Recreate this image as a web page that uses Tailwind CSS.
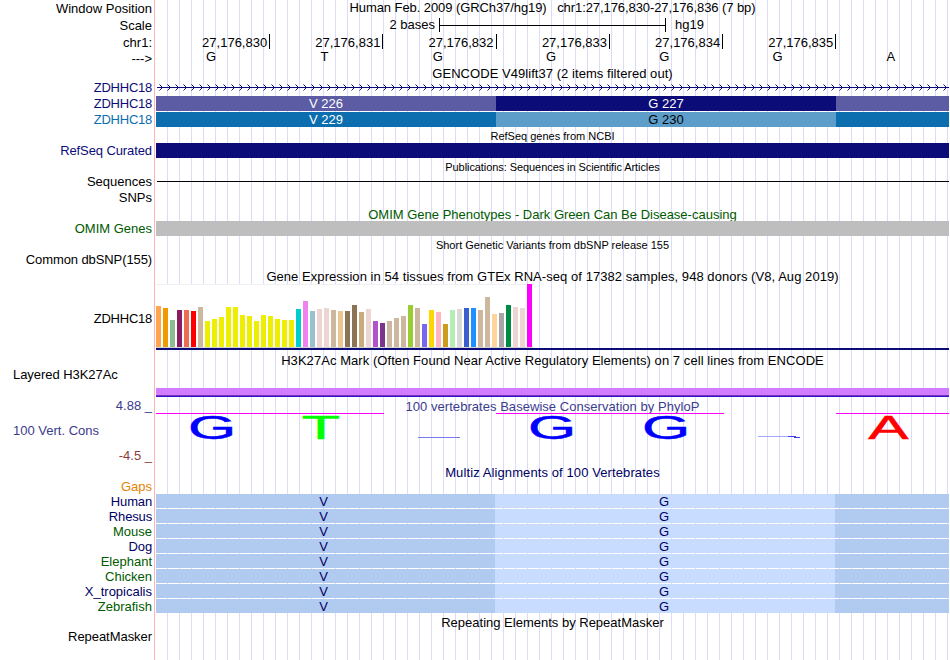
<!DOCTYPE html>
<html lang="en">
<head>
    <meta charset="UTF-8">
    <meta name="viewport" content="width=device-width, initial-scale=1.0">
    <title>Genome Browser</title>
    <script src="https://cdn.jsdelivr.net/npm/@tailwindcss/browser@4"></script>
</head>
<body class="bg-white">
  <main class="flex w-[949px] h-[660px] overflow-hidden font-['Liberation_Sans',Arial,sans-serif] text-[13px] leading-[15px] text-black whitespace-pre">

    <!-- track labels -->
    <section aria-label="labels" class="flex flex-col w-[155px] shrink-0 border-r border-[#ffb4b4] pr-[2px] text-right">
      <p class="h-[17px] pt-px">Window Position</p>
      <p class="h-[17px] pt-px">Scale</p>
      <p class="h-[16px] pt-px">chr1:</p>
      <p class="h-[15px] pt-px">---&gt;</p>
      <p class="h-[16px] mt-[15px] tracking-[-0.25px] text-[#0c0c78]">ZDHHC18</p>
      <p class="h-[16px] tracking-[-0.25px] text-[#0c0c78]">ZDHHC18</p>
      <p class="h-[16px] tracking-[-0.25px] text-[#0c6eaf]">ZDHHC18</p>
      <p class="h-[15px] mt-[15px] tracking-[-0.1px] text-[#0c0c78]">RefSeq Curated</p>
      <p class="h-[16px] mt-[16px]">Sequences</p>
      <p class="h-[15px]">SNPs</p>
      <p class="h-[15px] mt-[16px] text-[#005a00]">OMIM Genes</p>
      <p class="h-[15px] mt-[16px] tracking-[-0.1px]">Common dbSNP(155)</p>
      <p class="h-[15px] mt-[44px] tracking-[-0.25px]">ZDHHC18</p>
      <p class="h-[15px] mt-[41px] pl-[13px] text-left tracking-[-0.05px]">Layered H3K27Ac</p>
      <p class="h-[15px] mt-[16px] text-[#3c3c8c]">4.88 _</p>
      <p class="h-[15px] mt-[10px] pl-[13px] text-left text-[#3c3c8c]">100 Vert. Cons</p>
      <p class="h-[15px] mt-[10px] text-[#8c3c3c]">-4.5 _</p>
      <p class="h-[15px] mt-[16px] text-[#e68200]">Gaps</p>
      <p class="h-[15px] tracking-[-0.15px] text-[#000064]">Human</p>
      <p class="h-[15px] tracking-[-0.15px] text-[#000064]">Rhesus</p>
      <p class="h-[15px] text-[#005a00]">Mouse</p>
      <p class="h-[15px] tracking-[-0.15px] text-[#000064]">Dog</p>
      <p class="h-[15px] text-[#005a00]">Elephant</p>
      <p class="h-[15px] text-[#005a00]">Chicken</p>
      <p class="h-[15px] text-[#000064]">X_tropicalis</p>
      <p class="h-[15px] text-[#005a00]">Zebrafish</p>
      <p class="h-[15px] mt-[15px] tracking-[-0.05px]">RepeatMasker</p>
    </section>

    <!-- tracks, guide line every 12px -->
    <section aria-label="tracks" class="flex flex-col w-[793px] ml-px shrink-0 text-center bg-[repeating-linear-gradient(90deg,transparent_0px,transparent_11px,#dcdcf8_11px,#dcdcf8_12px)]">
      <h1 class="h-[17px] tracking-[-0.08px]">Human Feb. 2009 (GRCh37/hg19)   chr1:27,176,830-27,176,836 (7 bp)</h1>

      <!-- scale -->
      <div class="flex h-[17px]">
        <span class="w-[279px] text-right">2 bases</span>
        <div class="flex items-center w-[227px] h-[14px] mt-px ml-[4px] border-x border-black">
          <div class="w-full h-px bg-black"></div>
        </div>
        <span class="ml-[9px]">hg19</span>
      </div>

      <!-- positions -->
      <div class="flex h-[15px] ml-px text-right">
        <span class="w-[113.2px] pr-[2px] pt-px border-r border-black">27,176,830</span>
        <span class="w-[113.2px] pr-[2px] pt-px border-r border-black">27,176,831</span>
        <span class="w-[113.2px] pr-[2px] pt-px border-r border-black">27,176,832</span>
        <span class="w-[113.4px] pr-[2px] pt-px border-r border-black">27,176,833</span>
        <span class="w-[113.2px] pr-[2px] pt-px border-r border-black">27,176,834</span>
        <span class="w-[113.2px] pr-[2px] pt-px border-r border-black">27,176,835</span>
      </div>
      <div class="grid grid-cols-7 h-[17px]">
        <span class="pr-[3px]">G</span>
        <span class="pr-[3px]">T</span>
        <span class="pr-[3px]">G</span>
        <span class="pr-[3px]">G</span>
        <span class="pr-[3px]">G</span>
        <span class="pr-[3px]">G</span>
        <span class="pr-[3px]">A</span>
      </div>

      <!-- GENCODE -->
      <h2 class="h-[14px] tracking-[0.05px]">GENCODE V49lift37 (2 items filtered out)</h2>
      <svg class="h-[16px] w-full shrink-0" viewBox="0 0 793 16">
        <defs>
          <pattern id="intron" width="8" height="16" patternUnits="userSpaceOnUse">
            <path d="M3.5 4.5 L6.5 7.5 L3.5 10.5" fill="none" stroke="#0c0c78" stroke-width="1"/>
          </pattern>
        </defs>
        <rect x="1" y="7" width="792" height="1" fill="#0c0c78"/>
        <rect width="793" height="16" fill="url(#intron)"/>
      </svg>
      <div class="flex h-[15px] mb-px text-white">
        <span class="w-[340px] bg-[#5c5ca4]">V 226</span>
        <span class="w-[340px] bg-[#0c0c78]">G 227</span>
        <span class="flex-1 bg-[#5c5ca4]"></span>
      </div>
      <div class="flex h-[15px] mb-px">
        <span class="w-[340px] bg-[#0c6eaf] text-white">V 229</span>
        <span class="w-[340px] bg-[#5c9dc9]">G 230</span>
        <span class="flex-1 bg-[#0c6eaf]"></span>
      </div>

      <!-- RefSeq, publications, OMIM, dbSNP -->
      <h2 class="h-[15px] pt-px text-[11px]">RefSeq genes from NCBI</h2>
      <div class="h-[15px] bg-[#0c0c78]"></div>
      <h2 class="h-[23px] pt-[2px] text-[11px] tracking-[-0.07px]">Publications: Sequences in Scientific Articles</h2>
      <div class="h-px ml-px bg-black"></div>
      <h2 class="h-[39px] pt-[25px] text-[#005a00]">OMIM Gene Phenotypes - Dark Green Can Be Disease-causing</h2>
      <div class="h-[15px] bg-[#bebebe] z-10"></div>
      <h2 class="h-[33px] pt-[2px] text-[11px]">Short Genetic Variants from dbSNP release 155</h2>

      <!-- GTEx -->
      <h2 class="h-[15px] tracking-[0.055px]">Gene Expression in 54 tissues from GTEx RNA-seq of 17382 samples, 948 donors (V8, Aug 2019)</h2>
      <div id="gtex" class="flex items-end gap-[2px] w-[377px] h-[64px] bg-white border-y border-t-[#f0f0f0] border-b-[#d2d2d2]"></div>
      <div class="h-[2px] bg-[#0c0c78]"></div>

      <!-- H3K27Ac -->
      <h2 class="h-[38px] pt-[3px] tracking-[0.06px]">H3K27Ac Mark (Often Found Near Active Regulatory Elements) on 7 cell lines from ENCODE</h2>
      <div class="h-[7px] bg-[#d27dff]"></div>
      <div class="h-px bg-[#7832be]"></div>
      <div class="h-px bg-[#3214c8]"></div>

      <!-- PhyloP conservation -->
      <h2 class="h-[16px] pt-[2px] tracking-[0.04px] text-[#3c3c8c]">100 vertebrates Basewise Conservation by PhyloP</h2>
      <div class="flex h-px">
        <div class="w-[228px] bg-[#ff00ff]"></div>
        <div class="w-[228px] ml-[112px] bg-[#ff00ff]"></div>
        <div class="w-[113px] ml-[112px] bg-[#ff00ff]"></div>
      </div>
      <svg class="h-[51px] w-full shrink-0 overflow-visible" viewBox="0 0 793 51" font-size="33" text-anchor="middle" stroke-width="0.5">
        <text transform="translate(56 24.8) scale(1.88 1)" fill="#00f" stroke="#00f">G</text>
        <text transform="translate(165 24.8) scale(1.9 1)" fill="#0f0" stroke="#0f0">T</text>
        <rect x="262" y="23" width="42" height="1" fill="#7878f0"/>
        <text transform="translate(396 24.8) scale(1.88 1)" fill="#00f" stroke="#00f">G</text>
        <text transform="translate(510 24.8) scale(1.88 1)" fill="#00f" stroke="#00f">G</text>
        <rect x="602" y="22" width="30" height="1" fill="#a5a5fa"/>
        <rect x="632" y="22" width="8" height="1" fill="#3c3cf0"/>
        <rect x="638" y="23" width="6" height="1" fill="#3c3cf0"/>
        <text transform="translate(732.5 24.8) scale(1.83 1)" fill="#f00" stroke="#f00">A</text>
      </svg>

      <!-- Multiz -->
      <h2 class="h-[29px] tracking-[0.1px] text-[#000064]">Multiz Alignments of 100 Vertebrates</h2>
      <div class="flex h-[14px] mb-px text-[#000064]">
        <span class="w-[339px] pr-[4px] bg-[#b0caf0]">V</span><span class="w-[340px] pr-[2px] bg-[#c8dcff]">G</span><span class="flex-1 bg-[#b0caf0]"></span>
      </div>
      <div class="flex h-[14px] mb-px text-[#000064]">
        <span class="w-[339px] pr-[4px] bg-[#b0caf0]">V</span><span class="w-[340px] pr-[2px] bg-[#c8dcff]">G</span><span class="flex-1 bg-[#b0caf0]"></span>
      </div>
      <div class="flex h-[14px] mb-px text-[#000064]">
        <span class="w-[339px] pr-[4px] bg-[#b0caf0]">V</span><span class="w-[340px] pr-[2px] bg-[#c8dcff]">G</span><span class="flex-1 bg-[#b0caf0]"></span>
      </div>
      <div class="flex h-[14px] mb-px text-[#000064]">
        <span class="w-[339px] pr-[4px] bg-[#b0caf0]">V</span><span class="w-[340px] pr-[2px] bg-[#c8dcff]">G</span><span class="flex-1 bg-[#b0caf0]"></span>
      </div>
      <div class="flex h-[14px] mb-px text-[#000064]">
        <span class="w-[339px] pr-[4px] bg-[#b0caf0]">V</span><span class="w-[340px] pr-[2px] bg-[#c8dcff]">G</span><span class="flex-1 bg-[#b0caf0]"></span>
      </div>
      <div class="flex h-[14px] mb-px text-[#000064]">
        <span class="w-[339px] pr-[4px] bg-[#b0caf0]">V</span><span class="w-[340px] pr-[2px] bg-[#c8dcff]">G</span><span class="flex-1 bg-[#b0caf0]"></span>
      </div>
      <div class="flex h-[14px] mb-px text-[#000064]">
        <span class="w-[339px] pr-[4px] bg-[#b0caf0]">V</span><span class="w-[340px] pr-[2px] bg-[#c8dcff]">G</span><span class="flex-1 bg-[#b0caf0]"></span>
      </div>
      <div class="flex h-[14px] mb-px text-[#000064]">
        <span class="w-[339px] pr-[4px] bg-[#b0caf0]">V</span><span class="w-[340px] pr-[2px] bg-[#c8dcff]">G</span><span class="flex-1 bg-[#b0caf0]"></span>
      </div>

      <h2 class="h-[15px] pt-px">Repeating Elements by RepeatMasker</h2>
    </section>
  </main>

  <script>
    // one bar per tissue: height, colour
    const tissues = [
      [41, '#ffa54f'], [39, '#ee9a00'], [27, '#8fbc8f'], [37, '#8b1c62'], [37, '#ee6a50'], [36, '#ff0000'], [40, '#cdb79e'],
      [26, '#eeee00'], [28, '#eeee00'], [30, '#eeee00'], [40, '#eeee00'], [40, '#eeee00'], [32, '#eeee00'], [31, '#eeee00'],
      [26, '#eeee00'], [32, '#eeee00'], [31, '#eeee00'], [28, '#eeee00'], [27, '#eeee00'], [27, '#eeee00'],
      [38, '#00cdcd'], [46, '#ee82ee'], [36, '#9ac0cd'], [38, '#eed5d2'], [39, '#eed5d2'], [37, '#cdb79e'], [36, '#eec591'],
      [36, '#8b7355'], [42, '#8b7355'], [35, '#cdaa7d'], [38, '#eed5d2'], [26, '#b452cd'], [24, '#7a378b'],
      [26, '#cdb79e'], [29, '#cdb79e'], [31, '#cdb79e'], [42, '#9acd32'], [39, '#cdb79e'], [23, '#7a67ee'], [37, '#ffd700'],
      [35, '#ffb6c1'], [23, '#cd9b1d'], [37, '#b4eeb4'], [38, '#d9d9d9'], [39, '#3a5fcd'], [39, '#1e90ff'],
      [37, '#cdb79e'], [50, '#cdb79e'], [33, '#ffd39b'], [34, '#a6a6a6'], [42, '#008b45'], [40, '#eed5d2'], [39, '#eed5d2'], [63, '#ff00ff']
    ];
    document.getElementById('gtex').innerHTML = tissues.map(([h, c]) =>
      `<div class="w-[5px] shrink-0" style="height:${h}px;background:${c}"></div>`).join('');
  </script>
</body>
</html>
